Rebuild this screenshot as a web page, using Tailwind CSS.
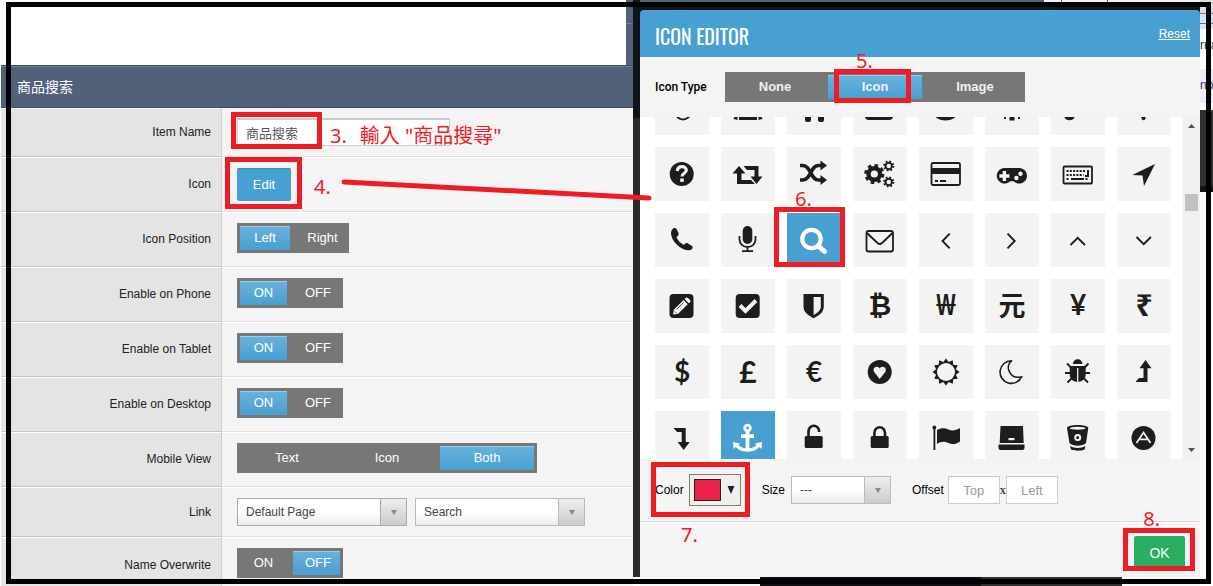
<!DOCTYPE html>
<html lang="zh-Hant">
<head>
<meta charset="utf-8">
<meta name="viewport" content="width=device-width,initial-scale=1">
<title>Icon Editor</title>
<script src="https://cdn.jsdelivr.net/npm/@tailwindcss/browser@4"></script>
</head>
<body class="bg-white text-[#222] text-xs font-['Liberation_Sans','Noto_Sans_CJK_TC',sans-serif]">

<main class="relative flex h-screen overflow-hidden">

  <!-- SETTINGS -->
  <section class="flex-1 flex flex-col pl-px">
    <div class="h-[65px] shrink-0 flex justify-end">
      <div class="w-[7px] bg-[#52617a]"><div class="h-6 border-b border-[#6d7f9e]"></div></div>
    </div>
    <h2 class="h-[43px] shrink-0 flex items-center pl-4 text-sm text-white bg-[#52617a] border-y border-[#414d63] shadow-[inset_0_1px_0_#6a7da0]">商品搜索</h2>

    <form class="flex flex-col">
      <!-- Item name -->
      <div class="flex h-[49px]">
        <label for="itemName" class="w-[221px] flex items-center justify-end pr-[10px] bg-[#e4e4e4] border-r border-b border-r-[#d0d0d0] border-b-[#c6c6c6] shadow-[inset_0_1px_0_#f4f4f4]">Item Name</label>
        <div class="relative flex-1 pl-[15px] pt-[10px] bg-[#f4f4f4] border-b border-[#e0e0e0]">
          <input id="itemName" value="商品搜索" class="w-[213px] h-7 px-2 text-[13px] text-[#555] bg-white border border-[#ccc] border-t-2">
          <span class="absolute left-[9px] top-1 w-[91px] h-[37px] border-5 border-[#ee1c25]"></span>
          <p class="absolute left-[108px] top-[14px] flex gap-[13px] text-xl leading-7 text-[#ee1c25] whitespace-nowrap font-['Noto_Sans','Noto_Sans_CJK_TC',sans-serif]"><span>3.</span><span>輸入 "商品搜尋"</span></p>
        </div>
      </div>
      <!-- Icon -->
      <div class="flex h-[55px]">
        <span class="w-[221px] flex items-center justify-end pr-[10px] bg-[#e4e4e4] border-r border-b border-r-[#d0d0d0] border-b-[#c6c6c6] shadow-[inset_0_1px_0_white]">Icon</span>
        <div class="relative flex-1 pl-[15px] pt-[11px] bg-[#f4f4f4] border-b border-[#e0e0e0] shadow-[inset_0_1px_0_white]">
          <button type="button" class="w-[54px] h-[33px] text-[13px] text-white bg-[#489fd1] rounded-xs border-t border-[#3d8fbf]">Edit</button>
          <span class="absolute left-[3px] top-0 w-[77px] h-[52px] border-5 border-[#ee1c25]"></span>
          <span class="absolute left-[92px] top-4 text-xl leading-7 text-[#ee1c25] font-['Noto_Sans',sans-serif]">4.</span>
          <svg class="absolute z-20 left-[118px] top-5 w-[314px] h-[26px]" viewBox="0 0 314 26"><path d="M4 5L309 21" fill="none" stroke="#ee1c25" stroke-width="5" stroke-linecap="round"/></svg>
        </div>
      </div>
      <!-- Icon position -->
      <div class="flex h-[55px]">
        <span class="w-[221px] flex items-center justify-end pr-[10px] bg-[#e4e4e4] border-r border-b border-r-[#d0d0d0] border-b-[#c6c6c6] shadow-[inset_0_1px_0_white]">Icon Position</span>
        <div class="flex-1 pl-[15px] pt-[11px] bg-[#f4f4f4] border-b border-[#e0e0e0] shadow-[inset_0_1px_0_white]">
          <div role="radiogroup" aria-label="Icon Position" class="relative flex w-28 h-[30px] text-[13px] text-white bg-[#777]">
            <label class="flex-1 p-[3px]"><input type="radio" name="pos" checked class="sr-only peer"><span class="block h-6 text-center leading-6 peer-checked:bg-linear-to-b from-[#69b2dc] to-[#489fd1] peer-checked:shadow-[inset_0_1px_0_#9bcdea]">Left</span></label>
            <label class="flex-1 p-[3px]"><input type="radio" name="pos" class="sr-only peer"><span class="block h-6 pl-[3px] text-center leading-6 peer-checked:bg-linear-to-b from-[#69b2dc] to-[#489fd1]">Right</span></label>
          </div>
        </div>
      </div>
      <!-- Phone -->
      <div class="flex h-[55px]">
        <span class="w-[221px] flex items-center justify-end pr-[10px] bg-[#e4e4e4] border-r border-b border-r-[#d0d0d0] border-b-[#c6c6c6] shadow-[inset_0_1px_0_white]">Enable on Phone</span>
        <div class="flex-1 pl-[15px] pt-[11px] bg-[#f4f4f4] border-b border-[#e0e0e0] shadow-[inset_0_1px_0_white]">
          <div role="radiogroup" aria-label="Enable on Phone" class="relative flex w-[106px] h-[30px] text-[13px] text-white bg-[#777]">
            <label class="flex-1 p-[3px]"><input type="radio" name="phone" checked class="sr-only peer"><span class="block h-6 text-center leading-6 peer-checked:bg-linear-to-b from-[#69b2dc] to-[#489fd1] peer-checked:shadow-[inset_0_1px_0_#9bcdea]">ON</span></label>
            <label class="flex-1 p-[3px]"><input type="radio" name="phone" class="sr-only peer"><span class="block h-6 pl-[3px] text-center leading-6 peer-checked:bg-linear-to-b from-[#69b2dc] to-[#489fd1]">OFF</span></label>
          </div>
        </div>
      </div>
      <!-- Tablet -->
      <div class="flex h-[55px]">
        <span class="w-[221px] flex items-center justify-end pr-[10px] bg-[#e4e4e4] border-r border-b border-r-[#d0d0d0] border-b-[#c6c6c6] shadow-[inset_0_1px_0_white]">Enable on Tablet</span>
        <div class="flex-1 pl-[15px] pt-[11px] bg-[#f4f4f4] border-b border-[#e0e0e0] shadow-[inset_0_1px_0_white]">
          <div role="radiogroup" aria-label="Enable on Tablet" class="relative flex w-[106px] h-[30px] text-[13px] text-white bg-[#777]">
            <label class="flex-1 p-[3px]"><input type="radio" name="tablet" checked class="sr-only peer"><span class="block h-6 text-center leading-6 peer-checked:bg-linear-to-b from-[#69b2dc] to-[#489fd1] peer-checked:shadow-[inset_0_1px_0_#9bcdea]">ON</span></label>
            <label class="flex-1 p-[3px]"><input type="radio" name="tablet" class="sr-only peer"><span class="block h-6 pl-[3px] text-center leading-6 peer-checked:bg-linear-to-b from-[#69b2dc] to-[#489fd1]">OFF</span></label>
          </div>
        </div>
      </div>
      <!-- Desktop -->
      <div class="flex h-[55px]">
        <span class="w-[221px] flex items-center justify-end pr-[10px] bg-[#e4e4e4] border-r border-b border-r-[#d0d0d0] border-b-[#c6c6c6] shadow-[inset_0_1px_0_white]">Enable on Desktop</span>
        <div class="flex-1 pl-[15px] pt-[11px] bg-[#f4f4f4] border-b border-[#e0e0e0] shadow-[inset_0_1px_0_white]">
          <div role="radiogroup" aria-label="Enable on Desktop" class="relative flex w-[106px] h-[30px] text-[13px] text-white bg-[#777]">
            <label class="flex-1 p-[3px]"><input type="radio" name="desktop" checked class="sr-only peer"><span class="block h-6 text-center leading-6 peer-checked:bg-linear-to-b from-[#69b2dc] to-[#489fd1] peer-checked:shadow-[inset_0_1px_0_#9bcdea]">ON</span></label>
            <label class="flex-1 p-[3px]"><input type="radio" name="desktop" class="sr-only peer"><span class="block h-6 pl-[3px] text-center leading-6 peer-checked:bg-linear-to-b from-[#69b2dc] to-[#489fd1]">OFF</span></label>
          </div>
        </div>
      </div>
      <!-- Mobile view -->
      <div class="flex h-[55px]">
        <span class="w-[221px] flex items-center justify-end pr-[10px] bg-[#e4e4e4] border-r border-b border-r-[#d0d0d0] border-b-[#c6c6c6] shadow-[inset_0_1px_0_white]">Mobile View</span>
        <div class="flex-1 pl-[15px] pt-[11px] bg-[#f4f4f4] border-b border-[#e0e0e0] shadow-[inset_0_1px_0_white]">
          <div role="radiogroup" aria-label="Mobile View" class="relative flex w-[300px] h-[30px] text-[13px] text-white bg-[#777]">
            <label class="flex-1 p-[3px]"><input type="radio" name="mobile" class="sr-only peer"><span class="block h-6 text-center leading-6 peer-checked:bg-linear-to-b from-[#69b2dc] to-[#489fd1]">Text</span></label>
            <label class="flex-1 p-[3px]"><input type="radio" name="mobile" class="sr-only peer"><span class="block h-6 text-center leading-6 peer-checked:bg-linear-to-b from-[#69b2dc] to-[#489fd1]">Icon</span></label>
            <label class="flex-1 p-[3px]"><input type="radio" name="mobile" checked class="sr-only peer"><span class="block h-6 text-center leading-6 peer-checked:bg-linear-to-b from-[#69b2dc] to-[#489fd1] peer-checked:shadow-[inset_0_1px_0_#9bcdea]">Both</span></label>
          </div>
        </div>
      </div>
      <!-- Link -->
      <div class="flex h-[50px]">
        <label for="link" class="w-[221px] flex items-center justify-end pr-[10px] bg-[#e4e4e4] border-r border-b border-r-[#d0d0d0] border-b-[#c6c6c6] shadow-[inset_0_1px_0_white]">Link</label>
        <div class="flex-1 flex gap-2 pl-[15px] pt-[11px] bg-[#f4f4f4] border-b border-[#e0e0e0] shadow-[inset_0_1px_0_white]">
          <div class="relative w-[170px] h-7">
            <select id="link" class="appearance-none w-full h-7 pl-2 pr-8 text-[#444] bg-linear-to-b from-white from-50% to-[#ececec] border border-[#aaa]"><option>Default Page</option></select>
            <span class="pointer-events-none absolute right-px top-px w-[26px] h-[26px] flex items-center justify-center border-l border-[#aaa] bg-linear-to-b from-[#eee] to-[#ccc]"><svg class="w-2 h-2" viewBox="0 0 8 8"><path d="M1 2h6L4 7z" fill="#888"/></svg></span>
          </div>
          <div class="relative w-[170px] h-7">
            <select aria-label="Page" class="appearance-none w-full h-7 pl-2 pr-8 text-[#444] bg-linear-to-b from-white from-50% to-[#ececec] border border-[#bbb]"><option>Search</option></select>
            <span class="pointer-events-none absolute right-px top-px w-[26px] h-[26px] flex items-center justify-center border-l border-[#bbb] bg-linear-to-b from-[#eee] to-[#ccc]"><svg class="w-2 h-2" viewBox="0 0 8 8"><path d="M1 2h6L4 7z" fill="#888"/></svg></span>
          </div>
        </div>
      </div>
      <!-- Name overwrite -->
      <div class="flex h-[55px]">
        <span class="w-[221px] flex items-center justify-end pr-[10px] bg-[#e4e4e4] border-r border-[#d0d0d0] shadow-[inset_0_1px_0_white]">Name Overwrite</span>
        <div class="flex-1 pl-[15px] pt-[11px] bg-[#f4f4f4] shadow-[inset_0_1px_0_white]">
          <div role="radiogroup" aria-label="Name Overwrite" class="relative flex w-[106px] h-[30px] text-[13px] text-white bg-[#777]">
            <label class="flex-1 p-[3px]"><input type="radio" name="over" class="sr-only peer"><span class="block h-6 text-center leading-6 peer-checked:bg-linear-to-b from-[#69b2dc] to-[#489fd1]">ON</span></label>
            <label class="flex-1 p-[3px]"><input type="radio" name="over" checked class="sr-only peer"><span class="block h-6 pl-[3px] text-center leading-6 peer-checked:bg-linear-to-b from-[#69b2dc] to-[#489fd1] peer-checked:shadow-[inset_0_1px_0_#9bcdea]">OFF</span></label>
          </div>
        </div>
      </div>
    </form>
  </section>

  <!-- dimmed page between the panels -->
  <div class="w-[7px] flex flex-col">
    <div class="h-[118px] bg-[#10141a]"></div>
    <div class="h-[459px] bg-[#2b2b2b]"></div>
  </div>

  <!-- ICON EDITOR -->
  <section class="w-[560px] flex flex-col">
    <div class="flex h-[2px] shrink-0">
      <div class="flex-1 bg-[#52617a]"></div>
      <div class="w-[156px] flex gap-[45px] pl-[17px] bg-[#f2f2f2]"><span class="w-px bg-[#555]"></span><span class="w-px bg-[#555]"></span></div>
    </div>
    <div class="bg-[#10141a] pt-2">
      <header class="flex items-center justify-between h-[47px] pl-[15px] pr-[10px] pt-1 text-white bg-[#489fd1] rounded-t">
        <h1 class="text-xl font-normal font-['Oswald','Liberation_Sans_Narrow','Roboto_Condensed','Open_Sans_Condensed',sans-serif]">ICON EDITOR</h1>
        <a href="#" class="underline -mt-1">Reset</a>
      </header>
    </div>

    <div class="flex items-center h-[60px] gap-4 pl-[15px] bg-[#f4f4f4] shrink-0">
      <span class="w-[54px] text-black font-medium font-['Roboto',sans-serif]">Icon Type</span>
      <div role="radiogroup" aria-label="Icon Type" class="relative flex w-[300px] h-[30px] text-[13px] font-bold text-[#f0f0f0] bg-[#777]">
        <label class="flex-1 p-[3px]"><input type="radio" name="type" class="sr-only peer"><span class="block h-6 text-center leading-6 peer-checked:bg-linear-to-b from-[#69b2dc] to-[#489fd1]">None</span></label>
        <label class="flex-1 p-[3px]"><input type="radio" name="type" checked class="sr-only peer"><span class="block h-6 text-center leading-6 peer-checked:bg-linear-to-b from-[#69b2dc] to-[#489fd1] peer-checked:shadow-[inset_0_1px_0_#9bcdea]">Icon</span></label>
        <label class="flex-1 p-[3px]"><input type="radio" name="type" class="sr-only peer"><span class="block h-6 text-center leading-6 peer-checked:bg-linear-to-b from-[#69b2dc] to-[#489fd1]">Image</span></label>
        <span class="absolute left-[109px] -top-[3px] w-[77px] h-[34px] border-5 border-[#ee1c25]"></span>
        <span class="absolute left-[131px] -top-[25px] text-xl leading-7 font-normal text-[#ee1c25] font-['Noto_Sans',sans-serif]">5.</span>
      </div>
    </div>

    <div class="flex h-[342px] shrink-0 overflow-hidden bg-white">
      <div class="flex-1 pl-[15px] text-[#1d1d1b]">
        <div class="-mt-9 grid grid-cols-8 gap-3 w-[516px]">
          <!-- row 0 -->
          <button aria-label="eye" class="size-[54px] bg-[#f3f3f3]"><svg viewBox="0 0 54 54" fill="none" stroke="currentColor" stroke-width="2"><circle cx="28" cy="31" r="7.5"/></svg></button>
          <button aria-label="film" class="size-[54px] bg-[#f3f3f3]"><svg viewBox="0 0 54 54" fill="currentColor"><path d="M18 34h18v5H18zM14 34h2.500v5l-4-1zM37.500 34H40l1.500 4-4 1z"/></svg></button>
          <button aria-label="headphones" class="size-[54px] bg-[#f3f3f3]"><svg viewBox="0 0 54 54" fill="currentColor"><rect x="18" y="28" width="6" height="13" rx="2"/><rect x="31" y="28" width="6" height="13" rx="2"/></svg></button>
          <button aria-label="drive" class="size-[54px] bg-[#f3f3f3]"><svg viewBox="0 0 54 54" fill="currentColor"><rect x="12" y="24" width="28" height="15" rx="4"/></svg></button>
          <button aria-label="disc" class="size-[54px] bg-[#f3f3f3]"><svg viewBox="0 0 54 54" fill="currentColor"><path d="M17 34h19v2.500c-5 4-14 4-19 0z"/></svg></button>
          <button aria-label="asterisk" class="size-[54px] bg-[#f3f3f3]"><svg viewBox="0 0 54 54" fill="currentColor"><path d="M24.500 30h5v9.500h-5zM19 35h2v3h-2zM33 35h2v3h-2z"/></svg></button>
          <button aria-label="music" class="size-[54px] bg-[#f3f3f3]"><svg viewBox="0 0 54 54" fill="currentColor"><ellipse cx="18.500" cy="36" rx="5" ry="3.200"/></svg></button>
          <button aria-label="marker" class="size-[54px] bg-[#f3f3f3]"><svg viewBox="0 0 54 54" fill="currentColor"><path d="M23 32h7l-2 6.500q-1.500 1.500-3 0z"/></svg></button>
          <!-- row 1 -->
          <button aria-label="question" class="size-[54px] bg-[#f3f3f3]"><svg viewBox="0 0 54 54"><circle cx="26.700" cy="27" r="12" fill="currentColor"/><path d="M22.300 24c.3-3 2.300-4.300 4.600-4.300 2.500 0 4.400 1.500 4.400 3.600 0 2.900-4.300 3-4.300 6.200" fill="none" stroke="#f3f3f3" stroke-width="3.200"/><path d="M25.200 31.500h3.600v3.400h-3.600z" fill="#f3f3f3"/></svg></button>
          <button aria-label="retweet" class="size-[54px] bg-[#f3f3f3]"><svg viewBox="0 0 54 54" fill="currentColor"><path d="M18 19l6.500 7.500h-4V33H30l4 4H16V26.500h-4.500zM22.500 19h15v10.500h4L35.500 37l-6-7.500h4V23H26z"/></svg></button>
          <button aria-label="shuffle" class="relative size-[54px] bg-[#f3f3f3]"><svg viewBox="0 0 54 54"><path d="M13 18.500h3c7.500 0 8 14.500 15 14.500h3M13 33h3c7.500 0 8-14.500 15-14.500h3" fill="none" stroke="currentColor" stroke-width="3.600"/><path d="M33.500 13.500l6.500 5-6.500 5zM33.500 28l6.500 5-6.500 5z" fill="currentColor"/></svg><span class="absolute left-2 top-[38px] text-xl leading-7 text-[#ee1c25] font-['Noto_Sans',sans-serif]">6.</span></button>
          <button aria-label="cogs" class="size-[54px] bg-[#f3f3f3]"><svg viewBox="0 0 54 54" fill="none" stroke="currentColor"><circle cx="21.300" cy="27" r="5.800" stroke-width="4.400"/><circle cx="21.300" cy="27" r="8.600" stroke-width="3" stroke-dasharray="3.500 3.254"/><circle cx="35.700" cy="19" r="3.200" stroke-width="1.900"/><circle cx="35.700" cy="19" r="4.700" stroke-width="1.800" stroke-dasharray="1.800 1.891"/><circle cx="35.700" cy="35" r="3.200" stroke-width="1.900"/><circle cx="35.700" cy="35" r="4.700" stroke-width="1.800" stroke-dasharray="1.800 1.891"/></svg></button>
          <button aria-label="credit card" class="size-[54px] bg-[#f3f3f3]"><svg viewBox="0 0 54 54"><rect x="12.500" y="16" width="28.500" height="22" rx="1.500" fill="none" stroke="currentColor" stroke-width="1.800"/><path d="M12 21h29v6H12zM16 33h3v2h-3zM21 33h6v2h-6z" fill="currentColor"/></svg></button>
          <button aria-label="gamepad" class="size-[54px] bg-[#f3f3f3]"><svg viewBox="0 0 54 54"><path d="M19.500 21h14.700a7.800 7.800 0 1 1-5.500 13.300h-3.600A7.800 7.800 0 1 1 19.500 21z" fill="currentColor"/><path d="M17.700 24h3.400v3.300h3.300v3.400h-3.300V34h-3.400v-3.300h-3.300v-3.400h3.300z" fill="#f3f3f3"/><circle cx="35.500" cy="26.800" r="2.200" fill="#f3f3f3"/><circle cx="31.400" cy="31" r="2.200" fill="#f3f3f3"/></svg></button>
          <button aria-label="keyboard" class="size-[54px] bg-[#f3f3f3]"><svg viewBox="0 0 54 54" fill="none" stroke="currentColor"><rect x="12.500" y="19.500" width="28.500" height="17" rx="1" stroke-width="1.800"/><path d="M15.500 24h19M15.500 28h17M15.500 32h3M34.500 32h3" stroke-width="2" stroke-dasharray="2 1.300"/><path d="M37 23v6h-3M20 32h13" stroke-width="2"/></svg></button>
          <button aria-label="location" class="size-[54px] bg-[#f3f3f3]"><svg viewBox="0 0 54 54" fill="currentColor"><path d="M38 17L27 39l-1.500-10.500L15.300 28z"/></svg></button>
          <!-- row 2 -->
          <button aria-label="phone" class="size-[54px] bg-[#f3f3f3]"><svg viewBox="0 0 54 54" fill="currentColor"><path d="M18 15.500c1.500-1 3-.5 3.500.5l2 4c.6 1.500 0 2.500-2 4.300 1.500 3.500 4 6 7.500 7.700 1.500-2 2.800-2.400 4-1.600l4 2.500c1 .6.8 2 0 3-1.800 2-5 1.800-8.500.3-6-2.800-10.500-8-12-13-1-3.500-.5-6 1.500-7.700z"/></svg></button>
          <button aria-label="microphone" class="size-[54px] bg-[#f3f3f3]"><svg viewBox="0 0 54 54"><rect x="21.700" y="13" width="9.600" height="18" rx="4.800" fill="currentColor"/><path d="M18.500 23v3.500c0 10 16 10 16 0V23M26.500 34v4M21 38.200h11" fill="none" stroke="currentColor" stroke-width="1.800"/></svg></button>
          <button aria-label="search" class="relative size-[54px] bg-[#489fd1] text-white"><svg viewBox="0 0 54 54" fill="none" stroke="currentColor"><circle cx="24.500" cy="26" r="9.200" stroke-width="4.200"/><path d="M32 33.500l5.500 5" stroke-width="5" stroke-linecap="round"/></svg><span class="absolute -left-[13px] -top-[6px] w-[71px] h-[60px] border-5 border-[#ee1c25]"></span></button>
          <button aria-label="envelope" class="size-[54px] bg-[#f3f3f3]"><svg viewBox="0 0 54 54" fill="none" stroke="currentColor" stroke-width="1.800"><rect x="13.500" y="18" width="26.500" height="20.500" rx="2"/><path d="M14 20l10.500 10q2.300 2 4.500 0l10.500-10"/></svg></button>
          <button aria-label="angle left" class="size-[54px] bg-[#f3f3f3]"><svg viewBox="0 0 54 54" fill="none" stroke="currentColor" stroke-width="1.900"><path d="M30.700 20.700L23.500 28l7.200 7.300"/></svg></button>
          <button aria-label="angle right" class="size-[54px] bg-[#f3f3f3]"><svg viewBox="0 0 54 54" fill="none" stroke="currentColor" stroke-width="1.900"><path d="M22.500 20.700l7.200 7.300-7.200 7.300"/></svg></button>
          <button aria-label="angle up" class="size-[54px] bg-[#f3f3f3]"><svg viewBox="0 0 54 54" fill="none" stroke="currentColor" stroke-width="1.900"><path d="M19.500 32l7.200-7.200 7.200 7.200"/></svg></button>
          <button aria-label="angle down" class="size-[54px] bg-[#f3f3f3]"><svg viewBox="0 0 54 54" fill="none" stroke="currentColor" stroke-width="1.900"><path d="M19.500 24l7.200 7.200 7.200-7.200"/></svg></button>
          <!-- row 3 -->
          <button aria-label="edit" class="size-[54px] bg-[#f3f3f3]"><svg viewBox="0 0 54 54"><rect x="14.500" y="15" width="24" height="24" rx="4" fill="currentColor"/><path d="M18 35.500l1-5 9.500-9.500 4.200 4.200-9.500 9.500zM29.500 20l1.500-1.300q1-.7 2 .3l2 2q1 1 .3 2L33.800 24.300z" fill="#f3f3f3"/><path d="M21.500 30.500l7-7M20 32.500l1.500 1.500" stroke="#1d1d1b" stroke-width=".8"/></svg></button>
          <button aria-label="check" class="size-[54px] bg-[#f3f3f3]"><svg viewBox="0 0 54 54"><rect x="14.700" y="15" width="24" height="24" rx="4" fill="currentColor"/><path d="M19 26.500l5.500 5.500L35 21.500" fill="none" stroke="#f3f3f3" stroke-width="4"/></svg></button>
          <button aria-label="shield" class="size-[54px] bg-[#f3f3f3]"><svg viewBox="0 0 54 54"><path d="M16.500 15h20.300v12.500c0 6-5 9-10.200 11.700-5.100-2.700-10.100-5.700-10.100-11.700z" fill="currentColor"/><path d="M26.600 18h7.200v9.500c0 4-3.500 6.300-7.200 8.500z" fill="#f3f3f3"/></svg></button>
          <button aria-label="bitcoin" class="size-[54px] bg-[#f3f3f3] text-[28px] leading-none font-bold font-['DejaVu_Sans',sans-serif]">₿</button>
          <button aria-label="won" class="size-[54px] pb-1 bg-[#f3f3f3] text-[28px] leading-none font-semibold font-['Open_Sans','Noto_Sans',sans-serif]">₩</button>
          <button aria-label="yuan" class="size-[54px] pb-[3px] bg-[#f3f3f3] text-[27px] leading-none font-bold font-['Noto_Sans_CJK_TC',sans-serif]">元</button>
          <button aria-label="yen" class="size-[54px] pb-1 bg-[#f3f3f3] text-[28px] leading-none font-bold font-['Lato',sans-serif]">¥</button>
          <button aria-label="rupee" class="size-[54px] pb-[3px] bg-[#f3f3f3] text-3xl leading-none font-bold font-['Noto_Sans',sans-serif]">₹</button>
          <!-- row 4 -->
          <button aria-label="dollar" class="size-[54px] pb-[3px] bg-[#f3f3f3] text-[28px] leading-none font-bold font-['Lato',sans-serif]">$</button>
          <button aria-label="pound" class="size-[54px] pb-[3px] bg-[#f3f3f3] text-3xl leading-none font-bold font-['Lato',sans-serif]">£</button>
          <button aria-label="euro" class="size-[54px] pb-[3px] bg-[#f3f3f3] text-[28px] leading-none font-bold font-['Lato',sans-serif]">€</button>
          <button aria-label="heart" class="size-[54px] bg-[#f3f3f3]"><svg viewBox="0 0 54 54"><circle cx="26.700" cy="27" r="12" fill="currentColor"/><path d="M26.700 34l-5.200-6.500c-1.500-2-1.200-4.200.5-5.200 1.600-1 3.700-.5 4.700 1.200 1-1.700 3.100-2.200 4.700-1.200 1.700 1 2 3.200.5 5.200z" fill="#f3f3f3"/></svg></button>
          <button aria-label="sun" class="size-[54px] bg-[#f3f3f3]"><svg viewBox="0 0 54 54"><path d="M40.500 27L36.950 29.670 38.700 33.750 34.280 34.280 33.750 38.700 29.670 36.950 27 40.500 24.330 36.950 20.250 38.700 19.720 34.280 15.300 33.750 17.050 29.670 13.500 27 17.050 24.330 15.300 20.250 19.720 19.720 20.250 15.300 24.330 17.050 27 13.500 29.670 17.050 33.750 15.300 34.280 19.720 38.700 20.250 36.950 24.330z" fill="currentColor"/><circle cx="27" cy="27" r="9" fill="#f3f3f3"/></svg></button>
          <button aria-label="moon" class="size-[54px] bg-[#f3f3f3]"><svg viewBox="0 0 54 54" fill="none" stroke="currentColor" stroke-width="1.600" stroke-linejoin="round"><path d="M26.500 15.800A11.300 11.300 0 1 0 36.700 31.700c-5 1.400-9.700-.4-12-4.400-2.300-4-1.700-8.700 1.800-11.500z"/></svg></button>
          <button aria-label="bug" class="size-[54px] bg-[#f3f3f3]"><svg viewBox="0 0 54 54"><path d="M22 19c0-6.500 9.400-6.500 9.400 0zM18.700 21h16v8c0 5-3 7.500-8 8-5-.5-8-3-8-8z" fill="currentColor"/><path d="M14 28h25M16 18.500l4 4M37.500 18.500l-4 4M16.500 37.500l4-4M37 37.500l-4-4" stroke="currentColor" stroke-width="1.800"/><path d="M26.700 23v14" stroke="#f3f3f3" stroke-width="1.300"/></svg></button>
          <button aria-label="level up" class="size-[54px] bg-[#f3f3f3]"><svg viewBox="0 0 54 54" fill="currentColor"><path d="M28.500 15l6 8.300h-4V37H18.500l3.500-4h4.500v-9.700h-4z"/></svg></button>
          <!-- row 5 -->
          <button aria-label="level down" class="size-[54px] bg-[#f3f3f3]"><svg viewBox="0 0 54 54" fill="currentColor"><path d="M18.500 17h12.200v14h4l-6 8-6-8h4V21H22z"/></svg></button>
          <button aria-label="anchor" class="size-[54px] bg-[#489fd1] text-white"><svg viewBox="0 0 54 54" fill="none" stroke="currentColor"><circle cx="26.500" cy="17" r="2.800" stroke-width="2.800"/><path d="M26.500 20v18M20 25.200h13" stroke-width="3.800"/><path d="M15.500 34c2 3.500 6 5 11 5s9-1.500 11-5" stroke-width="3.400"/><path d="M12 31l7 1.500-6.500 5.500zM41 31l-7 1.500 6.500 5.500z" fill="currentColor" stroke="none"/></svg></button>
          <button aria-label="unlock" class="size-[54px] bg-[#f3f3f3]"><svg viewBox="0 0 54 54"><rect x="17.700" y="25" width="18" height="12" rx="1.500" fill="currentColor"/><path d="M21.500 26v-5.500a5.300 5.800 0 0 1 10.600 0V21" fill="none" stroke="currentColor" stroke-width="2.600"/></svg></button>
          <button aria-label="lock" class="size-[54px] bg-[#f3f3f3]"><svg viewBox="0 0 54 54"><rect x="17.700" y="25" width="18" height="12" rx="1.500" fill="currentColor"/><path d="M21.400 26v-4a5.300 5.800 0 0 1 10.600 0v4" fill="none" stroke="currentColor" stroke-width="2.600"/></svg></button>
          <button aria-label="flag" class="size-[54px] bg-[#f3f3f3]"><svg viewBox="0 0 54 54" fill="currentColor"><circle cx="15.300" cy="16.500" r="1.900"/><path d="M14.500 17h1.800v22h-1.800zM18 19c4-2.300 7.500-2.500 11.500-.5 4 1.700 7.500.8 11.500-1.500v13.500c-4 2.800-8 3.300-11.500 1.500-4-2-8-1.500-11.500 1z"/></svg></button>
          <button aria-label="drive box" class="size-[54px] bg-[#f3f3f3]"><svg viewBox="0 0 54 54"><path d="M15.500 15h22.500l.7 17H14.700zM13.500 33.500h26V37q0 2-2 2h-22q-2 0-2-2z" fill="currentColor"/><path d="M23.500 27h6v2.200h-6z" fill="#f3f3f3"/></svg></button>
          <button aria-label="bucket" class="size-[54px] bg-[#f3f3f3]"><svg viewBox="0 0 54 54"><path d="M16 17c0-4 21.300-4 21.300 0l-2.300 15c-3 3.500-13.500 3.500-16.500 0zM19 35c4 2.500 11.500 2.500 15.500 0l-1 3.500c-3 1.600-10.500 1.600-13.500 0z" fill="currentColor"/><ellipse cx="26.700" cy="17.200" rx="8" ry="1.500" fill="#f3f3f3"/><circle cx="26.700" cy="26.500" r="2.500" fill="none" stroke="#f3f3f3" stroke-width="2"/></svg></button>
          <button aria-label="adn" class="size-[54px] bg-[#f3f3f3]"><svg viewBox="0 0 54 54"><circle cx="26.500" cy="27" r="12" fill="currentColor"/><path d="M19.500 32l7-10.500 7 10.500M23 28.300h7" fill="none" stroke="#f3f3f3" stroke-width="1.800"/></svg></button>
        </div>
      </div>
      <!-- scrollbar -->
      <div class="w-[17px] flex flex-col items-center justify-between py-[6px] bg-[#f1f1f1]">
        <svg class="w-[7px] h-[6px]" viewBox="0 0 7 6"><path d="M0 5h7L3.500 1z" fill="#505050"/></svg>
        <div class="w-[13px] flex-1 pt-[65px]"><div class="h-[17px] bg-[#c1c1c1]"></div></div>
        <svg class="w-[7px] h-[6px]" viewBox="0 0 7 6"><path d="M0 1h7L3.500 5z" fill="#505050"/></svg>
      </div>
    </div>

    <div class="relative flex items-center h-[63px] shrink-0 pl-[15px] text-black bg-[#f4f4f4] border-b border-[#d8d8d8]">
      <span class="mr-[5px]">Color</span>
      <button aria-label="Color" class="flex items-center gap-[6px] w-[52px] h-8 mr-[21px] pl-1 bg-[#efefef] border border-[#94795d]">
        <span class="w-[27px] h-[22px] bg-[#ea2349] border border-[#222]"></span>
        <svg class="w-2 h-2" viewBox="0 0 8 8"><path d="M.500 0h7L4 8z" fill="#222"/></svg>
      </button>
      <span class="absolute left-[11px] top-[3px] w-[99px] h-[55px] border-5 border-[#ee1c25]"></span>
      <label for="size" class="mr-[6px]">Size</label>
      <div class="relative w-[100px] h-7 mr-[21px]">
        <select id="size" class="appearance-none w-full h-7 pl-2 pr-8 text-[#444] bg-linear-to-b from-white from-50% to-[#ececec] border border-[#bbb]"><option>---</option></select>
        <span class="pointer-events-none absolute right-px top-px w-[26px] h-[26px] flex items-center justify-center border-l border-[#bbb] bg-linear-to-b from-[#eee] to-[#ccc]"><svg class="w-2 h-2" viewBox="0 0 8 8"><path d="M1 2h6L4 7z" fill="#888"/></svg></span>
      </div>
      <label for="offTop" class="mr-1">Offset</label>
      <input id="offTop" placeholder="Top" class="w-[52px] h-7 text-center text-[13px] bg-white border border-[#ccc] placeholder:text-[#999]">
      <span class="font-['Liberation_Serif',serif]">x</span>
      <input aria-label="Left" placeholder="Left" class="w-[52px] h-7 text-center text-[13px] bg-white border border-[#ccc] placeholder:text-[#999]">
    </div>

    <footer class="relative flex justify-end h-[55px] shrink-0 pt-[14px] pr-[15px] bg-[#f4f4f4] shadow-[inset_0_1px_0_white]">
      <span class="absolute left-[41px] -top-px text-xl leading-7 text-[#ee1c25] font-['Noto_Sans',sans-serif]">7.</span>
      <button class="w-[51px] h-[34px] text-sm text-white bg-[#27ae60] rounded-xs">OK</button>
      <span class="absolute right-[5px] top-[6px] w-[72px] h-[43px] border-5 border-[#ee1c25]"></span>
      <span class="absolute right-10 -top-[17px] text-xl leading-7 text-[#ee1c25] font-['Noto_Sans',sans-serif]">8.</span>
    </footer>
    <div class="flex-1 flex pl-[120px] pr-[78px] bg-[#f8f8f8]">
      <div class="w-[221px] bg-[#0c0f14]"></div>
      <div class="flex-1 bg-[#303030]"></div>
    </div>
  </section>

  <!-- page edge on the right -->
  <aside class="w-[13px] shrink-0 overflow-hidden text-[#333]">
    <div class="h-[14px] bg-[#ddd] border-b border-[#777]"></div>
    <div class="h-[10px] bg-[#d5e2fa] border-b border-[#667]"></div>
    <div class="h-[5px] bg-[#d5e2fa]"></div>
    <div class="h-10 pt-2">rna</div>
    <div class="h-[34px] pt-2 bg-[#e9eef9] text-[#336]">np</div>
    <div class="h-[7px]"></div>
    <div class="h-[82px] bg-[#303030] border-b-6 border-[#10141a]"></div>
  </aside>

  <!-- frame -->
  <div class="pointer-events-none absolute z-30 left-[6px] top-[2px] right-[2px] bottom-[2px] border-5 border-black"></div>
</main>

</body>
</html>
